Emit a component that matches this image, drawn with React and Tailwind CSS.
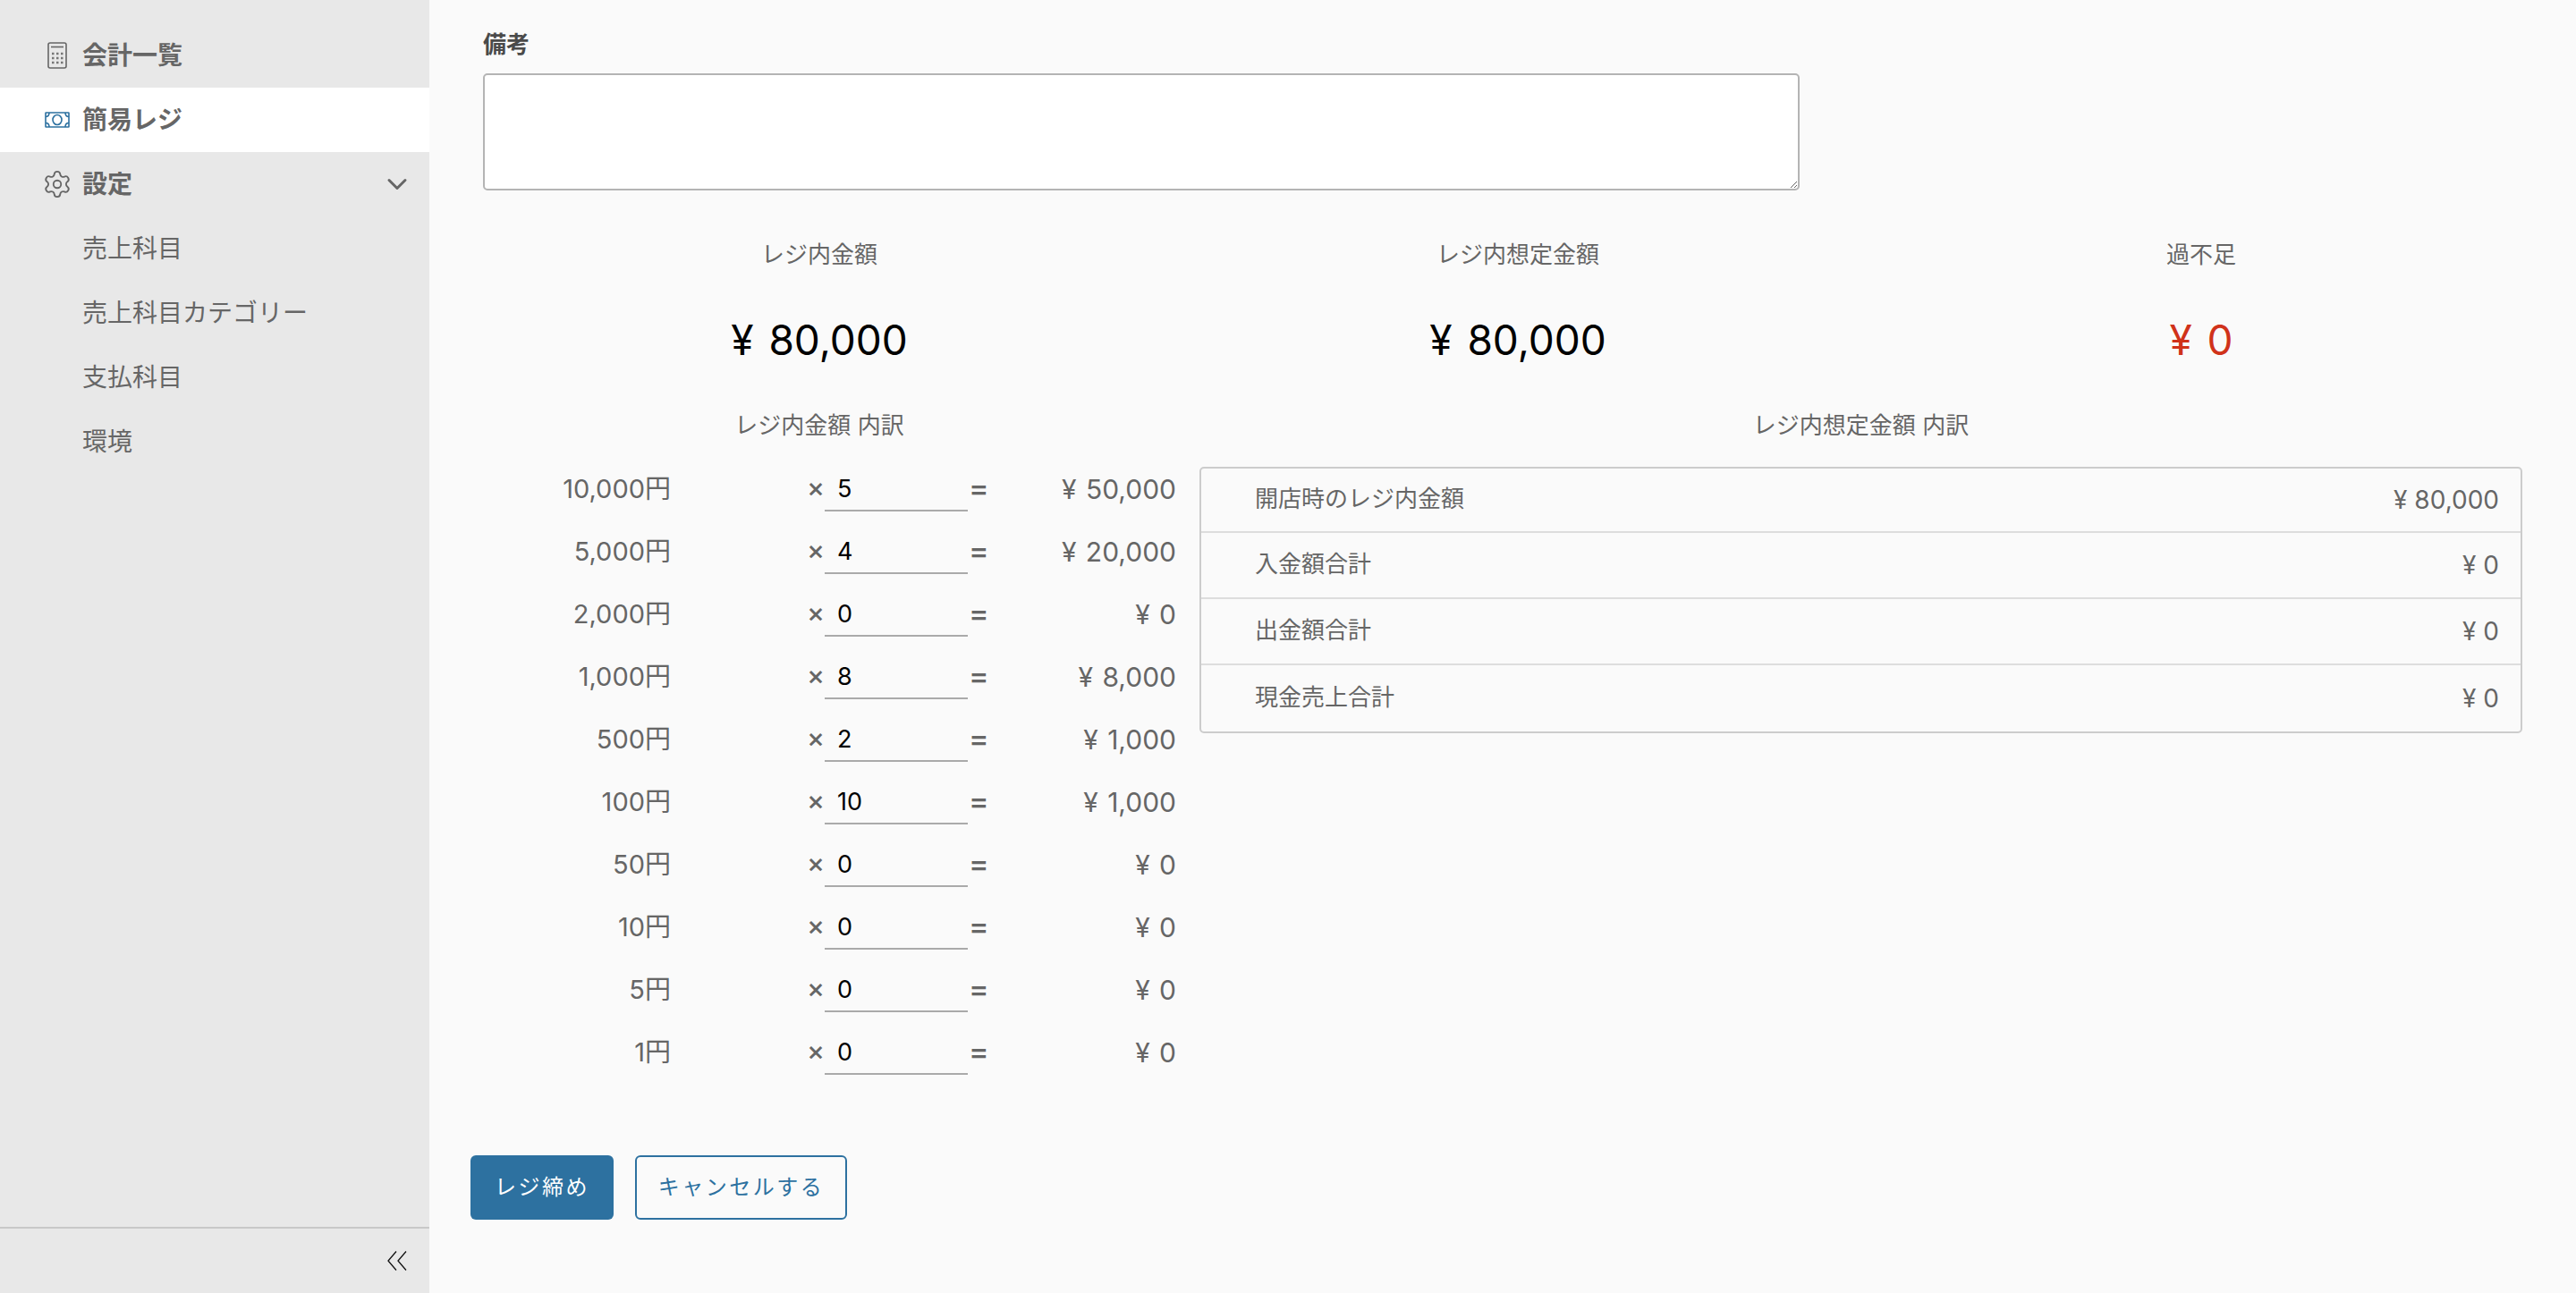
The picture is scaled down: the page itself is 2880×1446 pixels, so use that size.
import { ChevronDown, Settings } from "lucide-react";

const denominations = [
  { label: "10,000円", count: "5", amount: "¥ 50,000" },
  { label: "5,000円", count: "4", amount: "¥ 20,000" },
  { label: "2,000円", count: "0", amount: "¥ 0" },
  { label: "1,000円", count: "8", amount: "¥ 8,000" },
  { label: "500円", count: "2", amount: "¥ 1,000" },
  { label: "100円", count: "10", amount: "¥ 1,000" },
  { label: "50円", count: "0", amount: "¥ 0" },
  { label: "10円", count: "0", amount: "¥ 0" },
  { label: "5円", count: "0", amount: "¥ 0" },
  { label: "1円", count: "0", amount: "¥ 0" },
];

const expected = [
  { label: "開店時のレジ内金額", amount: "¥ 80,000" },
  { label: "入金額合計", amount: "¥ 0" },
  { label: "出金額合計", amount: "¥ 0" },
  { label: "現金売上合計", amount: "¥ 0" },
];

const subItems = ["売上科目", "売上科目カテゴリー", "支払科目", "環境"];

const CalculatorIcon = () => (
  <svg width="22" height="30" viewBox="0 0 22 30" fill="none" stroke="#666" strokeWidth="1.6">
    <rect x="1" y="1" width="20" height="28" rx="2" />
    <path d="M4 5.500h14" />
    <path
      d="M5 13h2.500M10 13h2.500M15 13h2.500M5 18h2.500M10 18h2.500M15 18h2.500M5 23h2.500M10 23h2.500M15 23h2.500"
      strokeWidth="2.400"
      stroke="#777"
    />
  </svg>
);

const BanknoteIcon = () => (
  <svg width="28" height="18" viewBox="0 0 28 18" fill="none" stroke="#2d71a0" strokeWidth="1.6">
    <rect x="1" y="1" width="26" height="16" rx="0.5" />
    <ellipse cx="14" cy="9" rx="5" ry="5.500" />
    <path d="M1 5.500c2.500 0 4-2 4-4.500M27 5.500c-2.500 0-4-2-4-4.500M1 12.500c2.500 0 4 2 4 4.500M27 12.500c-2.500 0-4 2-4 4.500" />
  </svg>
);

const DoubleChevronIcon = () => (
  <svg width="24" height="24" viewBox="0 0 24 24" fill="none" stroke="#111" strokeWidth="1.3">
    <path d="M11 1.500 2 12l9 10.500M22 1.500 13 12l9 10.500" />
  </svg>
);

const SummaryColumn = ({ title, value, className, valueClass }) => (
  <div className={`text-center ${className}`}>
    <div className="h-8 text-[26px] leading-8 text-[#666]">{title}</div>
    <div className={`mt-[61px] h-[36px] text-[46px] leading-[36px] [word-spacing:4px] ${valueClass}`}>{value}</div>
  </div>
);

const App = () => {
  return (
    <div className="flex h-screen overflow-hidden bg-[#fafafa] text-[#666] [font-family:Inter,'Noto_Sans_CJK_JP',sans-serif]">
      {/* Sidebar */}
      <aside className="flex w-[480px] shrink-0 flex-col bg-[#e8e8e8]">
        <nav className="flex flex-col pt-[26px] text-[28px]">
          <div className="flex h-[72px] items-center font-bold">
            <span className="flex w-[92px] justify-center pl-[36px]">
              <CalculatorIcon />
            </span>
            会計一覧
          </div>
          <div className="flex h-[72px] items-center bg-white font-bold">
            <span className="flex w-[92px] justify-center pl-[36px]">
              <BanknoteIcon />
            </span>
            簡易レジ
          </div>
          <div className="flex h-[72px] items-center font-bold">
            <span className="flex w-[92px] justify-center pl-[36px]">
              <Settings size={34} strokeWidth={1.3} />
            </span>
            設定
            <ChevronDown size={36} strokeWidth={2} className="ml-auto mr-[18px]" />
          </div>
          {subItems.map((item) => (
            <div key={item} className="flex h-[72px] items-center pl-[92px]">
              {item}
            </div>
          ))}
        </nav>
        <div className="mt-auto flex h-[74px] items-center justify-end border-t-2 border-[#c8c8c8] pr-[24px]">
          <DoubleChevronIcon />
        </div>
      </aside>

      {/* Main */}
      <main className="min-w-0 flex-1 pl-[46px]">
        <div className="pl-[14px]">
          <label className="block pt-[32px] text-[26px] font-bold leading-9 text-[#4a4a4a]">備考</label>
          <textarea
            readOnly
            className="mt-[14px] block h-[131px] w-[1472px] rounded-[5px] border-2 border-[#b4b4b4] bg-white"
          />
        </div>

        <div className="mt-[56px] flex">
          <SummaryColumn title="レジ内金額" value="¥ 80,000" className="w-[780px]" valueClass="text-black" />
          <SummaryColumn title="レジ内想定金額" value="¥ 80,000" className="w-[782px]" valueClass="text-black" />
          <SummaryColumn title="過不足" value="¥ 0" className="w-[746px]" valueClass="text-[#d0321a]" />
        </div>

        <div className="mt-[62px] flex">
          {/* 内訳: cash count */}
          <div className="w-[815px] shrink-0">
            <div className="h-8 w-[780px] text-center text-[26px] leading-8">レジ内金額 内訳</div>
            <div className="mt-[20px]">
              {denominations.map((row) => (
                <div key={row.label} className="flex h-[70px] items-center text-[29px]">
                  <span className="w-[224px] text-right">{row.label}</span>
                  <span className="w-[172px] -translate-y-[2px] text-right text-[30px] font-medium">×</span>
                  <input
                    readOnly
                    value={row.count}
                    className="h-[50px] w-[160px] border-b-2 border-[#aaa] bg-transparent pl-[14px] text-[27px] text-black outline-none"
                  />
                  <span className="flex w-[233px] shrink-0 items-center justify-between pl-[1px] text-[30px] [word-spacing:2px]">
                    <span className="-translate-y-[2px] text-[34px] font-medium">=</span>
                    <span>{row.amount}</span>
                  </span>
                </div>
              ))}
            </div>
          </div>

          {/* 内訳: expected */}
          <div className="w-[1479px] shrink-0">
            <div className="h-8 text-center text-[26px] leading-8">レジ内想定金額 内訳</div>
            <div className="mt-[30px] divide-y-2 divide-[#ddd] rounded-[5px] border-2 border-[#ccc]">
              {expected.map((row) => (
                <div
                  key={row.label}
                  className="flex h-[74px] items-center justify-between pl-[60px] pr-[24px] first:h-[72px]"
                >
                  <span className="-translate-y-[2px] text-[26px]">{row.label}</span>
                  <span className="text-[28px]">{row.amount}</span>
                </div>
              ))}
            </div>
          </div>
        </div>

        <div className="mt-[80px] flex gap-[24px]">
          <button className="h-[72px] w-[160px] rounded-[6px] bg-[#2d71a0] text-[24px] tracking-[2.500px] text-white">
            レジ締め
          </button>
          <button className="h-[72px] w-[237px] rounded-[6px] border-2 border-[#2d71a0] text-[24px] tracking-[2.500px] text-[#2d71a0]">
            キャンセルする
          </button>
        </div>
      </main>
    </div>
  );
};

export default App;
